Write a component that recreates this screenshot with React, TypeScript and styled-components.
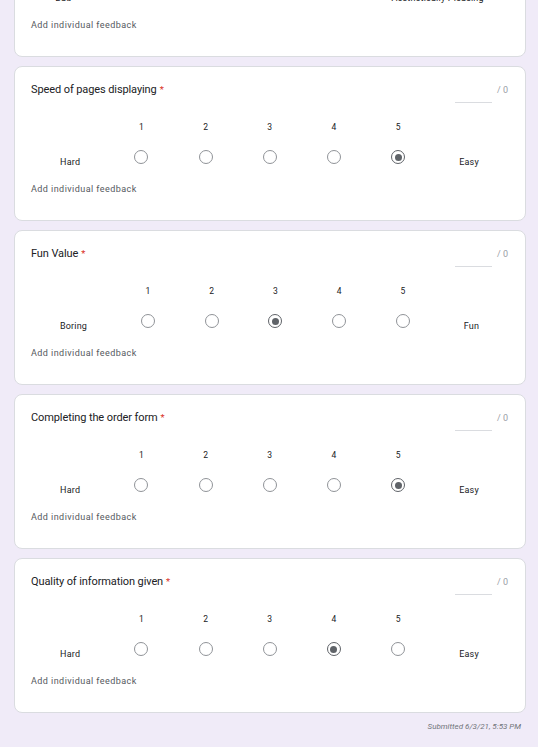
import React from 'react';
import styled, { createGlobalStyle } from 'styled-components';

const GlobalStyle = createGlobalStyle`
  html, body {
    margin: 0;
    padding: 0;
    background: #f0ebf8;
    font-family: Roboto, "Liberation Sans", Arial, sans-serif;
    overflow: hidden;
  }
`

const Page = styled.div`
  width: 512px;
  margin: -98px 0 0 14px;
  display: flex;
  flex-direction: column;
  gap: 9px;
`

const Card = styled.div`
  box-sizing: border-box;
  background: #fff;
  border: 1px solid #dadce0;
  border-radius: 8px;
  padding: 16px 17px 24px 16px;
`

const TitleRow = styled.div`
  display: flex;
  justify-content: space-between;
  align-items: flex-start;
  height: 14px;
`

const Title = styled.div`
  font-size: 11px;
  line-height: 14px;
  color: #202124;
  letter-spacing: -0.1px;
`

const Star = styled.span`
  color: #d93025;
  margin-left: 3px;
  font-size: 9.5px;
`

const Score = styled.div`
  display: flex;
  align-items: flex-start;
  font-size: 9px;
  line-height: 14px;
  color: #9aa0a6;
`

const ScoreInput = styled.div`
  width: 37px;
  height: 19px;
  border-bottom: 1px solid #dadce0;
  margin-right: 5px;
`

const Scale = styled.div`
  display: flex;
  margin-top: 23px;
`

const Column = styled.div<{ $label?: boolean }>`
  flex: 1 1 auto;
  display: flex;
  flex-direction: column;
  align-items: center;
  padding: 0 ${(p) => (p.$label ? '4px' : '0')};
  min-width: ${(p) => (p.$label ? '0' : '15px')};
`

const Number = styled.div`
  height: 14px;
  font-size: 8.5px;
  line-height: 14px;
  color: #202124;
`

const Cell = styled.div<{ $label?: boolean }>`
  height: 20px;
  margin-top: 13px;
  display: flex;
  align-items: ${(p) => (p.$label ? 'flex-end' : 'center')};
`

const EndLabel = styled.div`
  font-size: 9px;
  line-height: 12px;
  color: #202124;
  white-space: nowrap;
  letter-spacing: 0.2px;
  margin-bottom: -1px;
`

const Radio = styled.div<{ $checked?: boolean }>`
  box-sizing: border-box;
  width: 14px;
  height: 14px;
  border-radius: 50%;
  border: 1.4px solid ${(p) => (p.$checked ? '#5f6368' : '#909398')};
  display: flex;
  align-items: center;
  justify-content: center;
  &::after {
    content: '';
    display: ${(p) => (p.$checked ? 'block' : 'none')};
    width: 7px;
    height: 7px;
    border-radius: 50%;
    background: #5f6368;
  }
`

const Feedback = styled.div`
  margin-top: 15px;
  font-size: 9px;
  line-height: 14px;
  color: #55595e;
  letter-spacing: 0.45px;
`

const Submitted = styled.div`
  text-align: right;
  padding-right: 5px;
  margin-top: -1px;
  font-size: 8px;
  line-height: 12px;
  font-style: italic;
  color: #70757a;
`

interface IQuestion {
  title: string
  low: string
  high: string
  value: number
}

const questions: IQuestion[] = [
  { title: 'Visual appeal', low: 'Bad', high: 'Aesthetically Pleasing', value: 5 },
  { title: 'Speed of pages displaying', low: 'Hard', high: 'Easy', value: 5 },
  { title: 'Fun Value', low: 'Boring', high: 'Fun', value: 3 },
  { title: 'Completing the order form', low: 'Hard', high: 'Easy', value: 5 },
  { title: 'Quality of information given', low: 'Hard', high: 'Easy', value: 4 },
]

const QuestionCard = ({ title, low, high, value }: IQuestion) => (
  <Card>
    <TitleRow>
      <Title>
        {title}
        <Star>*</Star>
      </Title>
      <Score>
        <ScoreInput />/ 0
      </Score>
    </TitleRow>
    <Scale>
      <Column $label>
        <Number />
        <Cell $label>
          <EndLabel>{low}</EndLabel>
        </Cell>
      </Column>
      {[1, 2, 3, 4, 5].map((n) => (
        <Column key={n}>
          <Number>{n}</Number>
          <Cell>
            <Radio $checked={n === value} />
          </Cell>
        </Column>
      ))}
      <Column $label>
        <Number />
        <Cell $label>
          <EndLabel>{high}</EndLabel>
        </Cell>
      </Column>
    </Scale>
    <Feedback>Add individual feedback</Feedback>
  </Card>
)

const App: React.FC = () => (
  <>
    <GlobalStyle />
    <Page>
      {questions.map((q) => (
        <QuestionCard key={q.title} {...q} />
      ))}
      <Submitted>Submitted 6/3/21, 5:53 PM</Submitted>
    </Page>
  </>
)

export default App
